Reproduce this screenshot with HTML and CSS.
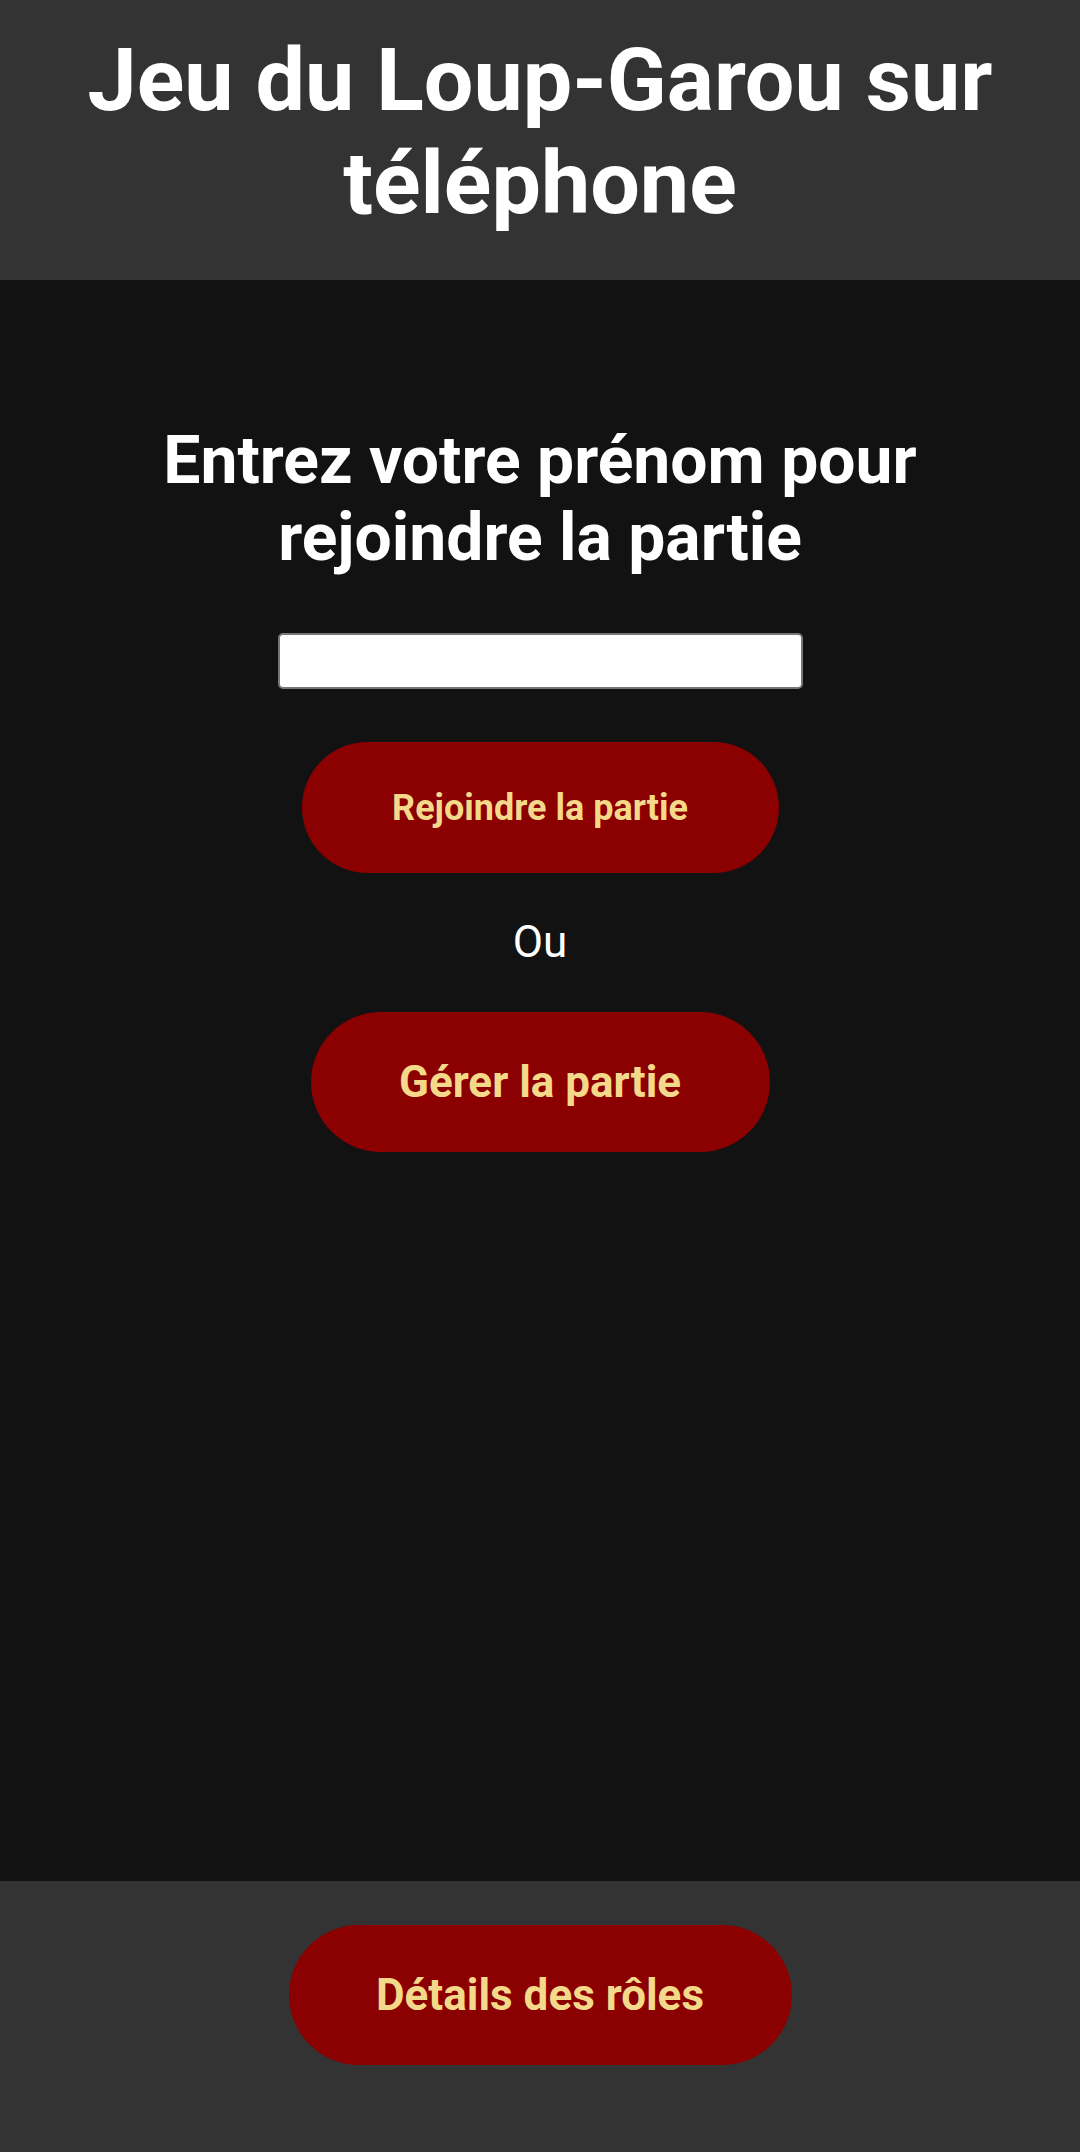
FILE: index.html
```html
<!DOCTYPE html>
<html lang="fr">
<head>
<meta charset="utf-8">
<title>Jeu du Loup-Garou sur téléphone</title>
<link rel="stylesheet" href="styles.css">
</head>
<body>
<div class="page">
  <header class="header">
    <h1 class="title">Jeu du Loup-Garou sur téléphone</h1>
  </header>
  <main class="main">
    <h2 class="prompt">Entrez votre prénom pour rejoindre la partie</h2>
    <input class="name-input" type="text">
    <button class="btn btn-join">Rejoindre la partie</button>
    <p class="or">Ou</p>
    <button class="btn btn-manage">Gérer la partie</button>
  </main>
  <footer class="footer">
    <button class="btn btn-roles">Détails des rôles</button>
  </footer>
</div>
</body>
</html>
```

FILE: styles.css
```css
html, body {
  margin: 0;
  padding: 0;
}
body {
  font-family: Roboto, "Liberation Sans", sans-serif;
  background: #121212;
  color: #ffffff;
}
.page {
  display: flex;
  flex-direction: column;
  min-height: 2152px;
}
.header {
  background: #333333;
  height: 280px;
  box-sizing: border-box;
  padding-top: 28px;
}
.title {
  margin: 0 auto;
  max-width: 960px;
  text-align: center;
  font-size: 88px;
  line-height: 103px;
  font-weight: 700;
}
.main {
  flex: 1;
  display: flex;
  flex-direction: column;
  align-items: center;
  padding-top: 142px;
}
.prompt {
  margin: 0;
  max-width: 860px;
  text-align: center;
  font-size: 66px;
  line-height: 77px;
  font-weight: 700;
}
.name-input {
  margin-top: 57px;
  width: 525px;
  height: 56px;
  box-sizing: border-box;
  border: 2px solid #767676;
  border-radius: 5px;
  background: #ffffff;
}
.btn {
  border: none;
  background: #8b0000;
  color: #f5d98b;
  font-family: Roboto, "Liberation Sans", sans-serif;
  font-weight: 700;
  border-radius: 999px;
  line-height: normal;
  box-sizing: border-box;
  padding: 0;
}
.btn-join {
  margin-top: 53px;
  width: 477px;
  height: 131px;
  font-size: 36px;
}
.or {
  margin: 45px 0 0;
  font-size: 44px;
  line-height: 49px;
}
.btn-manage {
  margin-top: 45px;
  width: 459px;
  height: 140px;
  font-size: 44px;
}
.footer {
  background: #333333;
  height: 271px;
  box-sizing: border-box;
  padding-top: 44px;
  display: flex;
  justify-content: center;
  align-items: flex-start;
}
.btn-roles {
  width: 503px;
  height: 140px;
  font-size: 44px;
}
```
